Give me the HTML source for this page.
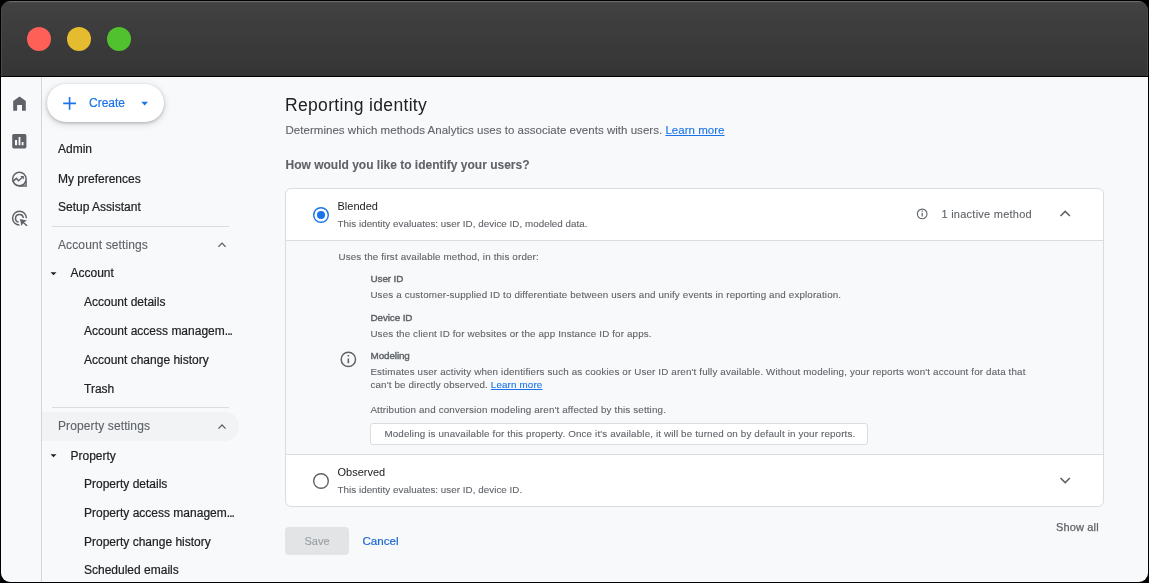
<!DOCTYPE html>
<html><head><meta charset="utf-8">
<style>
*{box-sizing:border-box;margin:0;padding:0}
html,body{width:1149px;height:583px;overflow:hidden;background:#000}
body{font-family:"Liberation Sans",sans-serif;position:relative;-webkit-font-smoothing:antialiased}
.win{position:absolute;left:0;top:0;width:1149px;height:583px;clip-path:inset(1px round 9px);background:#f8f9fa;will-change:transform}
.tb{position:absolute;left:0;top:0;width:1149px;height:77px;background:linear-gradient(to bottom,#4c4c4c 0px,#414141 2px,#353535 74px);border-top:2px solid #6a6a6a;border-bottom:1px solid #000;box-shadow:inset 2px 0 0 #4a4a4a,inset -2px 0 0 #4a4a4a}
.dot{position:absolute;top:27px;width:24px;height:24px;border-radius:50%}
.t{position:absolute;white-space:nowrap;line-height:1}
.rail{position:absolute;left:41px;top:77px;width:1px;height:506px;background:#d5d6d8}
.nav{color:#202124;font-size:12px;-webkit-text-stroke:0.2px #202124}
.sub{color:#5f6368;font-size:12px;letter-spacing:0.12px;-webkit-text-stroke:0.12px #5f6368}
.hr{position:absolute;height:1px;background:#dadce0}
.g{color:#5f6368;-webkit-text-stroke:0.1px #5f6368}
.d{color:#202124}
.lnk{color:#1a73e8;text-decoration:underline;-webkit-text-stroke:0.1px #1a73e8}
.bx{position:absolute}
</style></head><body>
<div class="win">
  <div class="tb">
    <div class="dot" style="left:27px;top:25px;background:#fe5f57"></div>
    <div class="dot" style="left:67px;top:25px;background:#e5bc2f"></div>
    <div class="dot" style="left:107px;top:25px;background:#52c12f"></div>
  </div>
  <div class="rail"></div>

  <!-- create button -->
  <div class="bx" style="left:47px;top:84px;width:117px;height:38px;border-radius:19px;background:#fff;box-shadow:0 1px 3px rgba(60,64,67,.3),0 2px 6px 1px rgba(60,64,67,.15)"></div>
  <span class="t" style="left:89px;top:97px;font-size:12px;color:#1a73e8;-webkit-text-stroke:0.2px #1a73e8">Create</span>

  <!-- nav -->
  <span class="t nav" style="left:58px;top:143.2px">Admin</span>
  <span class="t nav" style="left:58px;top:172.5px">My preferences</span>
  <span class="t nav" style="left:58px;top:201.3px">Setup Assistant</span>
  <div class="hr" style="left:52px;top:226px;width:177px"></div>
  <span class="t sub" style="left:58px;top:239.2px">Account settings</span>
  <span class="t nav" style="left:70.5px;top:267.2px">Account</span>
  <span class="t nav" style="left:84px;top:296.4px">Account details</span>
  <span class="t nav" style="left:84px;top:325.4px">Account access managem<span style="letter-spacing:-0.9px">...</span></span>
  <span class="t nav" style="left:84px;top:354.4px">Account change history</span>
  <span class="t nav" style="left:84px;top:383.2px">Trash</span>
  <div class="hr" style="left:52px;top:407px;width:177px"></div>
  <div class="bx" style="left:42px;top:412px;width:197px;height:28.5px;border-radius:0 14.25px 14.25px 0;background:#f1f3f4"></div>
  <span class="t sub" style="left:58px;top:420.4px">Property settings</span>
  <span class="t nav" style="left:70.5px;top:449.5px">Property</span>
  <span class="t nav" style="left:84px;top:478.4px">Property details</span>
  <span class="t nav" style="left:84px;top:507.3px">Property access managem<span style="letter-spacing:-0.9px">...</span></span>
  <span class="t nav" style="left:84px;top:536.2px">Property change history</span>
  <span class="t nav" style="left:84px;top:564.3px">Scheduled emails</span>

  <!-- main -->
  <span class="t d" style="left:285px;top:97px;font-size:17.5px;letter-spacing:0.33px">Reporting identity</span>
  <span class="t g" style="left:285.5px;top:125.2px;font-size:11.5px;letter-spacing:0.03px">Determines which methods Analytics uses to associate events with users. <span class="lnk">Learn more</span></span>
  <span class="t g" style="left:285.5px;top:159px;font-size:12px;font-weight:700">How would you like to identify your users?</span>

  <!-- card -->
  <div class="bx" style="left:285px;top:188px;width:819px;height:319px;border:1px solid #dadce0;border-radius:6px;background:#fff;overflow:hidden">
    <div class="bx" style="left:0;top:51px;width:100%;height:215px;background:#f8f9fa;border-top:1px solid #dadce0;border-bottom:1px solid #dadce0"></div>
  </div>

  <span class="t d" style="left:337.5px;top:200.8px;font-size:11px">Blended</span>
  <span class="t g" style="left:337.5px;top:218.6px;font-size:9.8px;letter-spacing:0.04px">This identity evaluates: user ID, device ID, modeled data.</span>
  <span class="t g" style="left:941.5px;top:208.7px;font-size:11px;letter-spacing:0.25px">1 inactive method</span>

  <span class="t g" style="left:338.5px;top:252.45px;font-size:9.8px;letter-spacing:0.15px">Uses the first available method, in this order:</span>
  <span class="t g" style="left:370.6px;top:273.90px;font-size:9.9px;letter-spacing:-0.12px;-webkit-text-stroke:0.4px #5f6368">User ID</span>
  <span class="t g" style="left:370.4px;top:289.75px;font-size:9.8px;letter-spacing:0.15px">Uses a customer-supplied ID to differentiate between users and unify events in reporting and exploration.</span>
  <span class="t g" style="left:370.6px;top:312.90px;font-size:9.9px;letter-spacing:-0.12px;-webkit-text-stroke:0.4px #5f6368">Device ID</span>
  <span class="t g" style="left:370.4px;top:329.25px;font-size:9.8px;letter-spacing:0.15px">Uses the client ID for websites or the app Instance ID for apps.</span>
  <span class="t g" style="left:370.6px;top:351.00px;font-size:9.9px;letter-spacing:-0.12px;-webkit-text-stroke:0.4px #5f6368">Modeling</span>
  <span class="t g" style="left:370.4px;top:366.75px;font-size:9.8px;letter-spacing:0.15px">Estimates user activity when identifiers such as cookies or User ID aren't fully available. Without modeling, your reports won't account for data that</span>
  <span class="t g" style="left:370.4px;top:379.75px;font-size:9.8px;letter-spacing:0.15px">can't be directly observed. <span class="lnk">Learn more</span></span>
  <span class="t g" style="left:370.4px;top:405.05px;font-size:9.8px;letter-spacing:0.15px">Attribution and conversion modeling aren't affected by this setting.</span>
  <div class="bx" style="left:370.4px;top:423px;width:498px;height:22px;border:1px solid #dadce0;border-radius:3px;background:#fff"></div>
  <span class="t g" style="left:384.4px;top:428.85px;font-size:9.8px;letter-spacing:0.15px">Modeling is unavailable for this property. Once it's available, it will be turned on by default in your reports.</span>

  <span class="t d" style="left:337.5px;top:467.3px;font-size:11px">Observed</span>
  <span class="t g" style="left:337.5px;top:485px;font-size:9.8px;letter-spacing:0.04px">This identity evaluates: user ID, device ID.</span>

  <span class="t g" style="left:1056px;top:522.1px;font-size:11px;letter-spacing:0.15px;-webkit-text-stroke:0.25px #5f6368">Show all</span>
  <div class="bx" style="left:285px;top:527px;width:64px;height:28px;border-radius:4px;background:#e3e4e5"></div>
  <span class="t" style="left:304.5px;top:536.1px;font-size:11px;color:#9aa0a6;-webkit-text-stroke:0.15px #9aa0a6">Save</span>
  <span class="t" style="left:362.5px;top:535.1px;font-size:11.6px;color:#1967d2;-webkit-text-stroke:0.2px #1967d2">Cancel</span>

  <!-- icon overlay in page coordinates -->
  <svg class="bx" style="left:0;top:0" width="1149" height="583" viewBox="0 0 1149 583">
    <!-- home -->
    <path fill="#5f6368" d="M13.2 101L19.6 96.4 25.8 101V110.8H22V104.9H17.1V110.8H13.2Z"/>
    <!-- reports -->
    <path fill="#5f6368" fill-rule="evenodd" d="M13.8 133.9H24.8Q26.4 133.9 26.4 135.5V146.8Q26.4 148.4 24.8 148.4H13.8Q12.2 148.4 12.2 146.8V135.5Q12.2 133.9 13.8 133.9ZM15 139.9V145.3H17.1V139.9ZM18.6 137V145.3H20.4V137ZM21.7 142V145.3H23.5V142Z"/>
    <!-- explore -->
    <circle cx="19.4" cy="179.1" r="6.75" fill="none" stroke="#5f6368" stroke-width="1.5"/>
    <path fill="none" stroke="#5f6368" stroke-width="1.5" d="M26.05 180.5V186.05H18.5"/>
    <path fill="none" stroke="#5f6368" stroke-width="1.5" d="M12.6 181.6L16.4 178.4 18.6 180.8 22.4 177.3"/>
    <path fill="#5f6368" d="M20.3 176.1H23.8V179.6Z"/>
    <!-- advertising -->
    <path fill="none" stroke="#5f6368" stroke-width="1.5" d="M26.4 218.2A6.9 6.9 0 1 0 19.5 225.1"/>
    <path fill="none" stroke="#5f6368" stroke-width="1.5" d="M23.3 218A3.9 3.9 0 1 0 18.6 222.1"/>
    <path fill="#5f6368" d="M19.9 219.1L26.9 220.6 24 222.3 27.6 225.2 26.6 226.2 23.1 223.3 21.4 225.9Z"/>
    <!-- create plus & caret -->
    <path fill="#1a73e8" d="M63.2 102.6H68.8V97H70.4V102.6H76V104.2H70.4V109.8H68.8V104.2H63.2Z"/>
    <path fill="#1a73e8" d="M141.3 101.8H148L144.65 105.5Z"/>
    <!-- account settings chevron -->
    <path fill="none" stroke="#5f6368" stroke-width="1.3" d="M218.4 246.7L222 243.1 225.6 246.7"/>
    <path fill="#202124" d="M50.5 272.2H56.5L53.5 275.2Z"/>
    <path fill="none" stroke="#5f6368" stroke-width="1.3" d="M218.4 428.6L222 425 225.6 428.6"/>
    <path fill="#202124" d="M50.5 454.3H56.5L53.5 457.3Z"/>
    <!-- blended radio -->
    <circle cx="321" cy="215" r="7.3" fill="none" stroke="#1a73e8" stroke-width="1.4"/>
    <circle cx="321" cy="215" r="4" fill="#1a73e8"/>
    <!-- observed radio -->
    <circle cx="321" cy="481" r="7.3" fill="none" stroke="#5f6368" stroke-width="1.4"/>
    <!-- info small -->
    <circle cx="922.2" cy="213.9" r="4.8" fill="none" stroke="#5f6368" stroke-width="1.1"/>
    <path fill="#5f6368" d="M921.6 212.8H922.8V216.6H921.6ZM921.6 210.6H922.8V211.8H921.6Z"/>
    <!-- chevron up / down -->
    <path fill="none" stroke="#5f6368" stroke-width="1.6" d="M1060.5 216L1065.2 211.4 1069.9 216"/>
    <path fill="none" stroke="#5f6368" stroke-width="1.6" d="M1060.5 478L1065.2 482.6 1069.9 478"/>
    <!-- info modeling -->
    <circle cx="348.35" cy="359.4" r="7.15" fill="none" stroke="#5f6368" stroke-width="1.5"/>
    <path fill="#5f6368" d="M347.55 358.4H349.15V363.3H347.55ZM347.55 355H349.15V356.6H347.55Z"/>
  </svg>
</div>
</body></html>
